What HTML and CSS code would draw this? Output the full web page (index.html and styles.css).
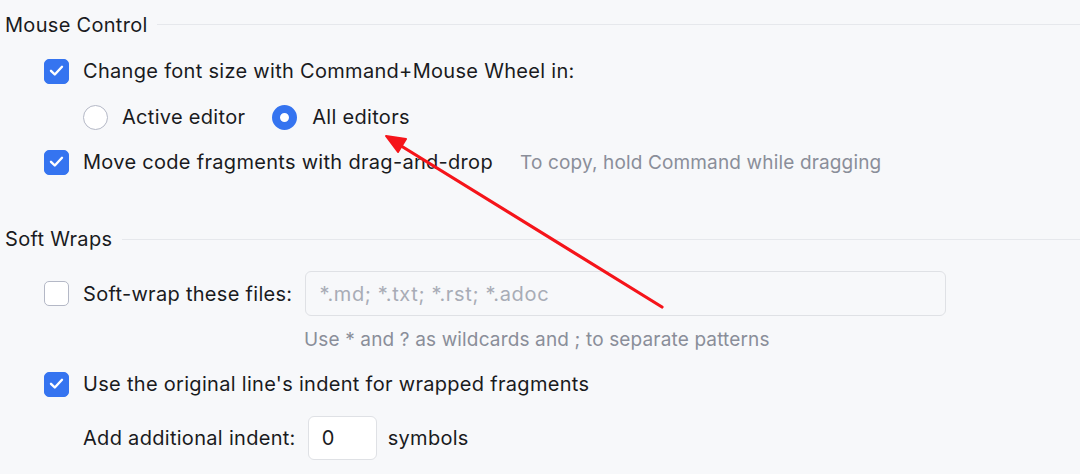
FILE: index.html
```html
<!DOCTYPE html>
<html>
<head>
<meta charset="utf-8">
<link rel="stylesheet" href="styles.css">
</head>
<body>
<div class="page">
  <div class="section-head h1"><span class="title">Mouse Control</span><span class="rule"></span></div>
  <div class="row r1">
    <span class="cb on"><svg viewBox="0 0 25 25" width="25" height="25"><path d="M7 12.8 L10.8 16.5 L18 8.8" fill="none" stroke="#fff" stroke-width="2.4" stroke-linecap="round" stroke-linejoin="round"/></svg></span>
    <span class="label">Change font size with Command+Mouse Wheel in:</span>
  </div>
  <div class="row r2 sub">
    <span class="radio"></span><span class="label">Active editor</span>
    <span class="radio sel"></span><span class="label">All editors</span>
  </div>
  <div class="row r3">
    <span class="cb on"><svg viewBox="0 0 25 25" width="25" height="25"><path d="M7 12.8 L10.8 16.5 L18 8.8" fill="none" stroke="#fff" stroke-width="2.4" stroke-linecap="round" stroke-linejoin="round"/></svg></span>
    <span class="label">Move code fragments with drag-and-drop</span>
    <span class="hint inline">To copy, hold Command while dragging</span>
  </div>
  <div class="section-head h2"><span class="title">Soft Wraps</span><span class="rule"></span></div>
  <div class="row r4">
    <span class="cb"></span>
    <span class="label">Soft-wrap these files:</span>
    <span class="field wide"><span class="ph">*.md; *.txt; *.rst; *.adoc</span></span>
  </div>
  <div class="row r5"><span class="hint">Use * and ? as wildcards and ; to separate patterns</span></div>
  <div class="row r6">
    <span class="cb on"><svg viewBox="0 0 25 25" width="25" height="25"><path d="M7 12.8 L10.8 16.5 L18 8.8" fill="none" stroke="#fff" stroke-width="2.4" stroke-linecap="round" stroke-linejoin="round"/></svg></span>
    <span class="label">Use the original line's indent for wrapped fragments</span>
  </div>
  <div class="row r7 sub">
    <span class="label">Add additional indent:</span>
    <span class="field num"><span class="val">0</span></span>
    <span class="label">symbols</span>
  </div>
  <svg class="arrow" width="1080" height="474" viewBox="0 0 1080 474">
    <line x1="662" y1="307" x2="398" y2="144" stroke="#f5141a" stroke-width="3.2" stroke-linecap="round"/>
    <path d="M386 136 L406 139 L398 152 Z" fill="#f5141a" stroke="#f5141a" stroke-width="2" stroke-linejoin="round"/>
  </svg>
</div>
</body>
</html>
```
FILE: styles.css
```css
html, body {
  margin: 0;
  padding: 0;
  background: #f7f8fa;
}
.page {
  position: relative;
  width: 1080px;
  height: 474px;
  overflow: hidden;
  font-family: Inter, "Noto Sans", sans-serif;
  font-size: 20px;
  letter-spacing: 0.3px;
  color: #1a1b1e;
  display: flex;
  flex-direction: column;
}
.section-head {
  display: flex;
  align-items: center;
  padding-left: 5px;
}
.section-head .title {
  white-space: nowrap;
}
.section-head .rule {
  flex: 1;
  height: 1px;
  background: #e6e8ec;
  margin-left: 10px;
}
.h1 { height: 49px; }
.h1 .rule { margin-left: 9px; }
.h2 { height: 40px; margin-top: 36px; }
.row {
  display: flex;
  align-items: center;
  padding-left: 44px;
}
.row.sub { padding-left: 83px; }
.r1 { height: 44px; }
.r2 { height: 48px; }
.r3 { height: 42px; }
.r4 { height: 45px; margin-top: 12px; }
.r5 { height: 46px; padding-left: 304px; }
.r6 { height: 44px; }
.r7 { height: 44px; margin-top: 10px; }
.cb {
  width: 25px;
  height: 25px;
  box-sizing: border-box;
  border-radius: 5px;
  border: 1.5px solid #b4b8c6;
  background: #fff;
  margin-right: 14px;
  flex: none;
  position: relative;
}
.cb.on {
  background: #3574f0;
  border-color: #3574f0;
}
.cb svg {
  position: absolute;
  left: -1.5px;
  top: -1.5px;
}
.radio {
  width: 25px;
  height: 25px;
  box-sizing: border-box;
  border-radius: 50%;
  border: 1.5px solid #b4b8c6;
  background: #fff;
  margin-right: 14px;
  flex: none;
}
.radio.sel {
  border: 8px solid #3574f0;
  background: #fff;
  margin-left: 27px;
  margin-right: 15px;
}
.label { white-space: nowrap; }
.hint {
  color: #8a8e99;
  white-space: nowrap;
  font-size: 19px;
  letter-spacing: 0.15px;
}
.hint.inline { margin-left: 27px; }
.field {
  box-sizing: border-box;
  height: 45px;
  border: 1.5px solid #dfe1e5;
  border-radius: 6px;
  background: #f7f8fa;
  display: flex;
  align-items: center;
}
.field.wide {
  width: 641px;
  margin-left: 13px;
  padding-left: 13px;
}
.ph {
  color: #a8acb6;
  font-size: 20px;
  letter-spacing: 0.65px;
}
.field.num {
  width: 69px;
  height: 44px;
  background: #fff;
  margin-left: 12px;
  margin-right: 11px;
  padding-left: 13px;
}
.arrow {
  position: absolute;
  left: 0;
  top: 0;
  pointer-events: none;
}
```
